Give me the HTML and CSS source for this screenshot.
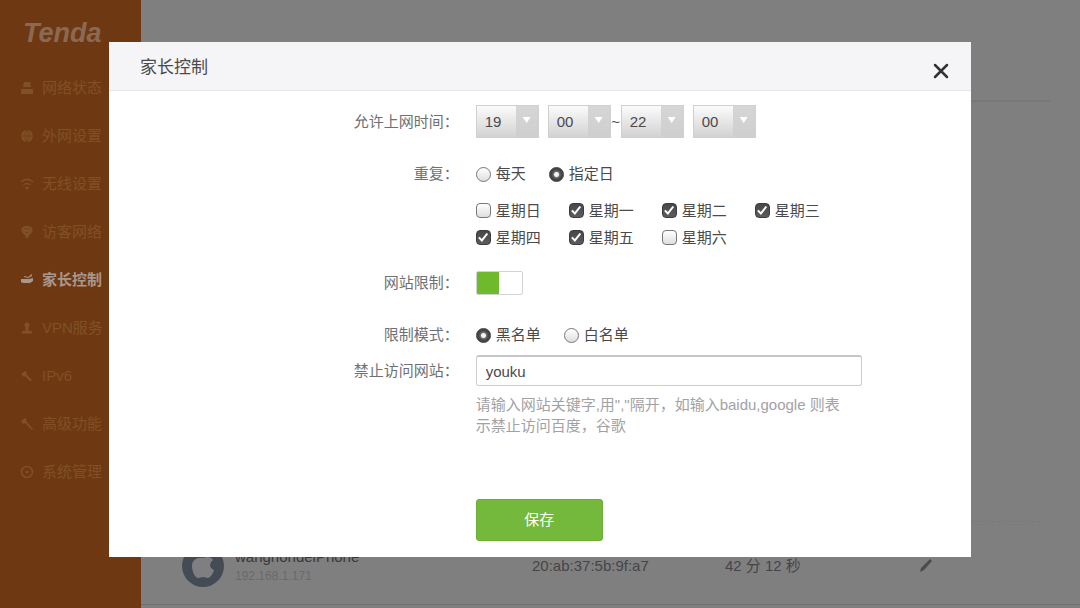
FILE: index.html
```html
<!DOCTYPE html>
<html lang="zh-CN">
<head>
<meta charset="utf-8">
<meta name="viewport" content="width=device-width, initial-scale=1">
<title>家长控制</title>
<link rel="stylesheet" href="styles.css">
</head>
<body>
<div class="page">
  <aside class="sidebar">
    <div class="brand">Tenda</div>
    <nav class="nav">
      <a class="nav-item" href="#"><svg class="nav-icon" viewBox="0 0 14 14"><path d="M4 1h6l1 5H3zM1 8h12v5H1z"/></svg>网络状态</a>
      <a class="nav-item" href="#"><svg class="nav-icon" viewBox="0 0 14 14"><circle cx="7" cy="7" r="6"/><path class="cut" d="M1 7h12M7 1v12M7 1c-4 4-4 8 0 12M7 1c4 4 4 8 0 12"/></svg>外网设置</a>
      <a class="nav-item" href="#"><svg class="nav-icon" viewBox="0 0 14 14"><path class="line" d="M1 5c4-3.500 8-3.500 12 0M3.500 8c2.500-2 4.500-2 7 0"/><circle cx="7" cy="11" r="1.500"/></svg>无线设置</a>
      <a class="nav-item" href="#"><svg class="nav-icon" viewBox="0 0 14 14"><path d="M7 1c4 0 6 2 5.500 5C12 8 10 9 9 10l-1 3H6l-1-3C4 9 2 8 1.500 6 1 3 3 1 7 1z"/><path class="cut" d="M3.500 5c2-2 5-2 7 0M5.500 7.500h3"/></svg>访客网络</a>
      <a class="nav-item active" href="#"><svg class="nav-icon" viewBox="0 0 14 14"><path d="M1 6h8l4-1v3l-3 2H3L1 9zM4 3l4 1 4-3v2L8 5 4 4z"/></svg>家长控制</a>
      <a class="nav-item" href="#"><svg class="nav-icon" viewBox="0 0 14 14"><circle cx="7" cy="4" r="2.500"/><path d="M5.500 6h3v4H12v2.500H2V10h3.500z"/></svg>VPN服务</a>
      <a class="nav-item" href="#"><svg class="nav-icon" viewBox="0 0 14 14"><path d="M1 5l4-3 2 2-1 1 6 6-1.500 1.500L5 7 4 8z"/></svg>IPv6</a>
      <a class="nav-item" href="#"><svg class="nav-icon" viewBox="0 0 14 14"><path d="M1 4l4-3 2 2-1 1 7 8-1 1-7-7-2 1z"/></svg>高级功能</a>
      <a class="nav-item" href="#"><svg class="nav-icon" viewBox="0 0 14 14"><circle class="line" cx="7" cy="7" r="5.500"/><circle cx="7" cy="7" r="1.500"/></svg>系统管理</a>
    </nav>
  </aside>
  <main class="content">
    <div class="content-head"></div>
    <div class="content-body"></div>
    <div class="devices">
      <table class="device-table">
        <tbody>
          <tr>
            <td class="col-name">
              <div class="device">
                <svg class="avatar" viewBox="0 0 42 42"><circle class="avatar-disc" cx="21" cy="21" r="21"/><path class="avatar-apple" d="M21 11c0-3 2-5 5-5 0 3-2 5-5 5zM20 13c2 0 3-1 6-1 2 0 4 1 5 3-4 3-4 8 1 10-1 4-4 8-6 8s-3-1-5-1-3 1-5 1c-3 0-6-7-6-12s4-9 10-8z"/></svg>
                <div class="device-text">
                  <div class="device-name">wanghondeiPhone</div>
                  <div class="device-ip">192.168.1.171</div>
                </div>
              </div>
            </td>
            <td class="col-mac">20:ab:37:5b:9f:a7</td>
            <td class="col-time">42 分 12 秒</td>
            <td class="col-edit">
              <button class="edit" type="button" aria-label="编辑"><svg class="edit-icon" viewBox="0 0 14 16"><path d="M11 1l2 2-8 9-4 2 1-4z"/></svg></button>
            </td>
          </tr>
        </tbody>
      </table>
    </div>
  </main>
</div>

<div class="overlay">
  <section class="dialog" role="dialog" aria-labelledby="dialog-title">
    <header class="dialog-head">
      <h1 class="dialog-title" id="dialog-title">家长控制</h1>
      <button class="close" type="button" aria-label="关闭"><svg class="close-icon" viewBox="0 0 16 16"><path d="M2 2l12 12M14 2L2 14"/></svg></button>
    </header>
    <form class="form">
      <div class="row">
        <label class="label" for="start-hour">允许上网时间：</label>
        <div class="times">
          <span class="select-box"><select class="select" id="start-hour"><option>19</option></select></span>
          <span class="select-box"><select class="select" aria-label="开始分钟"><option>00</option></select></span>
          <span class="tilde">~</span>
          <span class="select-box"><select class="select" aria-label="结束小时"><option>22</option></select></span>
          <span class="select-box"><select class="select" aria-label="结束分钟"><option>00</option></select></span>
        </div>
      </div>
      <div class="row row-repeat">
        <span class="label">重复：</span>
        <div class="options">
          <label class="option"><input class="radio" type="radio" name="repeat">每天</label>
          <label class="option"><input class="radio" type="radio" name="repeat" checked>指定日</label>
        </div>
      </div>
      <div class="row row-days">
        <div class="days">
          <label class="option"><input class="check" type="checkbox">星期日</label>
          <label class="option"><input class="check" type="checkbox" checked>星期一</label>
          <label class="option"><input class="check" type="checkbox" checked>星期二</label>
          <label class="option"><input class="check" type="checkbox" checked>星期三</label>
          <label class="option"><input class="check" type="checkbox" checked>星期四</label>
          <label class="option"><input class="check" type="checkbox" checked>星期五</label>
          <label class="option"><input class="check" type="checkbox">星期六</label>
        </div>
      </div>
      <div class="row row-limit">
        <label class="label" for="limit">网站限制：</label>
        <input class="switch" id="limit" type="checkbox" role="switch" checked>
      </div>
      <div class="row row-mode">
        <span class="label">限制模式：</span>
        <div class="options">
          <label class="option"><input class="radio" type="radio" name="mode" checked>黑名单</label>
          <label class="option"><input class="radio" type="radio" name="mode">白名单</label>
        </div>
      </div>
      <div class="row row-sites">
        <label class="label" for="sites">禁止访问网站：</label>
        <input class="text" id="sites" type="text" value="youku">
      </div>
      <div class="row row-hint">
        <p class="hint">请输入网站关键字,用","隔开，如输入baidu,google 则表示禁止访问百度，谷歌</p>
      </div>
      <div class="row row-save">
        <button class="save" type="submit">保存</button>
      </div>
    </form>
  </section>
</div>
</body>
</html>
```
FILE: styles.css
```css
* {
  box-sizing: border-box;
}

body {
  margin: 0;
  font: 15px/24px "Liberation Sans", "Noto Sans CJK SC", sans-serif;
  color: #4a4a4d;
  background: #807f80;
}

button,
input,
select {
  margin: 0;
  font: inherit;
  color: inherit;
}

.page {
  display: flex;
  min-height: 100vh;
}

/* Sidebar */
.sidebar {
  flex: none;
  width: 141px;
  background: #6e3912;
}

.brand {
  padding: 18px 0 0 23px;
  font-size: 27px;
  line-height: 30px;
  font-weight: bold;
  font-style: italic;
  color: #8a6a54;
}

.nav {
  padding-top: 16px;
}

.nav-item {
  display: flex;
  align-items: center;
  gap: 8px;
  height: 48px;
  padding-left: 20px;
  color: #805026;
  text-decoration: none;
}

.nav-item.active {
  color: #a8978c;
  font-weight: bold;
}

.nav-icon {
  width: 14px;
  height: 14px;
  fill: currentColor;
}

.nav-icon .line {
  fill: none;
  stroke: currentColor;
  stroke-width: 1.5;
}

.nav-icon .cut {
  fill: none;
  stroke: #6e3912;
  stroke-width: 0.6;
}

/* Device list */
.content {
  flex: 1;
  display: flex;
  flex-direction: column;
  padding-bottom: 3px;
}

.content-head {
  height: 102px;
  margin: 0 30px 0 41px;
  border-bottom: 2px solid #78777a;
}

.content-body {
  flex: 1;
  margin: 0 40px 0 41px;
  border-bottom: 1px dashed #79797a;
}

.devices {
  padding: 0 30px 0 41px;
  border-bottom: 1px solid #6f6e70;
}

.device-table {
  width: 100%;
  table-layout: fixed;
  border-collapse: collapse;
  color: #454547;
}

.device-table td {
  height: 82px;
  padding: 6px 0 0;
}

.col-name {
  width: 350px;
}

.col-mac {
  width: 193px;
}

.col-time {
  width: 194px;
}

.device {
  display: flex;
  align-items: center;
  gap: 11px;
}

.avatar {
  width: 42px;
  height: 42px;
}

.avatar-disc {
  fill: #444b55;
}

.avatar-apple {
  fill: #7f7e80;
}

.device-name {
  line-height: 20px;
  color: #39393b;
}

.device-ip {
  font-size: 12px;
  line-height: 18px;
  color: #6a696b;
}

.edit {
  display: block;
  padding: 0;
  border: 0;
  background: none;
  color: #4b4b4d;
}

.edit-icon {
  display: block;
  width: 14px;
  height: 16px;
  fill: currentColor;
}

/* Dialog */
.overlay {
  position: fixed;
  inset: 0;
  padding: 42px 109px;
  overflow: auto;
}

.dialog {
  background: #fff;
}

.dialog-head {
  display: flex;
  justify-content: space-between;
  align-items: center;
  height: 49px;
  padding: 0 22px 0 31px;
  background: #f5f5f7;
  border-bottom: 1px solid #e6e6e8;
}

.dialog-title {
  margin: 0;
  padding-top: 3px;
  font-size: 17px;
  font-weight: normal;
  line-height: 24px;
}

.close {
  padding: 10px 0 0;
  border: 0;
  background: none;
}

.close-icon {
  display: block;
  width: 16px;
  height: 16px;
  fill: none;
  stroke: #333335;
  stroke-width: 2.5;
  stroke-linecap: round;
}

.form {
  padding: 14px 0 16px;
}

.row {
  display: grid;
  grid-template-columns: 12fr 17fr;
  column-gap: 17px;
  align-items: center;
  justify-items: start;
}

.row > :last-child {
  grid-column: 2;
}

.row-repeat { margin-top: 24px; }
.row-days { margin-top: 11px; }
.row-limit { margin-top: 20px; }
.row-mode { margin-top: 28px; }
.row-sites { margin-top: 8px; }
.row-hint { margin-top: 8px; }
.row-save { margin-top: 63px; }

.label {
  justify-self: end;
  color: #707074;
}

.times {
  display: flex;
  align-items: center;
}

.select-box {
  position: relative;
  width: 63px;
  height: 33px;
}

.select-box + .select-box {
  margin-left: 9px;
}

.select-box::after {
  content: "";
  position: absolute;
  top: 12px;
  right: 8px;
  width: 8px;
  height: 6px;
  background: #fff;
  clip-path: polygon(0 0, 100% 0, 50% 100%);
  pointer-events: none;
}

.select {
  appearance: none;
  width: 100%;
  height: 100%;
  padding: 0 0 0 8px;
  border: 1px solid #d0d0d2;
  border-radius: 0;
  background:
    linear-gradient(#d6d6d7, #cececf) right / 22px 100% no-repeat,
    linear-gradient(#fbfbfb, #d2d2d3);
}

.tilde {
  width: 10px;
  text-align: center;
}

.options {
  display: flex;
  gap: 23px;
}

.days {
  display: grid;
  grid-template-columns: repeat(4, 93px);
  grid-auto-rows: 27px;
  align-items: center;
}

.option {
  display: flex;
  align-items: center;
  gap: 5px;
}

.radio,
.check {
  appearance: none;
  width: 15px;
  height: 15px;
  border: 1px solid #77777a;
  background: linear-gradient(#fff, #dededf);
}

.radio {
  border-radius: 50%;
}

.radio:checked {
  border-color: #3c3c3f;
  background: radial-gradient(circle, #f4f4f4 0 2px, #707073 3px, #454548 5px);
}

.check {
  display: grid;
  place-items: center;
  border-radius: 4px;
}

.check:checked {
  border-color: #3c3c3f;
  background: linear-gradient(#48484b, #5c5c5f);
}

.check:checked::after {
  content: "";
  width: 10px;
  height: 9px;
  background: #fff;
  clip-path: polygon(0 55%, 15% 42%, 36% 68%, 84% 0, 100% 12%, 38% 100%);
}

.switch {
  appearance: none;
  width: 47px;
  height: 24px;
  border: 1px solid #d3d3d7;
  border-radius: 2px;
  background: linear-gradient(#6fb92c, #6fb92c) left / 22px 100% no-repeat #fff;
}

.text {
  width: 386px;
  max-width: 100%;
  height: 31px;
  padding: 0 9px;
  border: 1px solid #cdcdd1;
  border-top: 2px solid #c6c6ca;
  border-radius: 3px;
  background: #fff;
}

.hint {
  max-width: 372px;
  margin: 0;
  line-height: 21px;
  color: #a2a2a6;
}

.save {
  width: 127px;
  height: 42px;
  padding: 0;
  border: 1px solid #6aae35;
  border-radius: 3px;
  background: #74b93c;
  color: #fff;
}
```
